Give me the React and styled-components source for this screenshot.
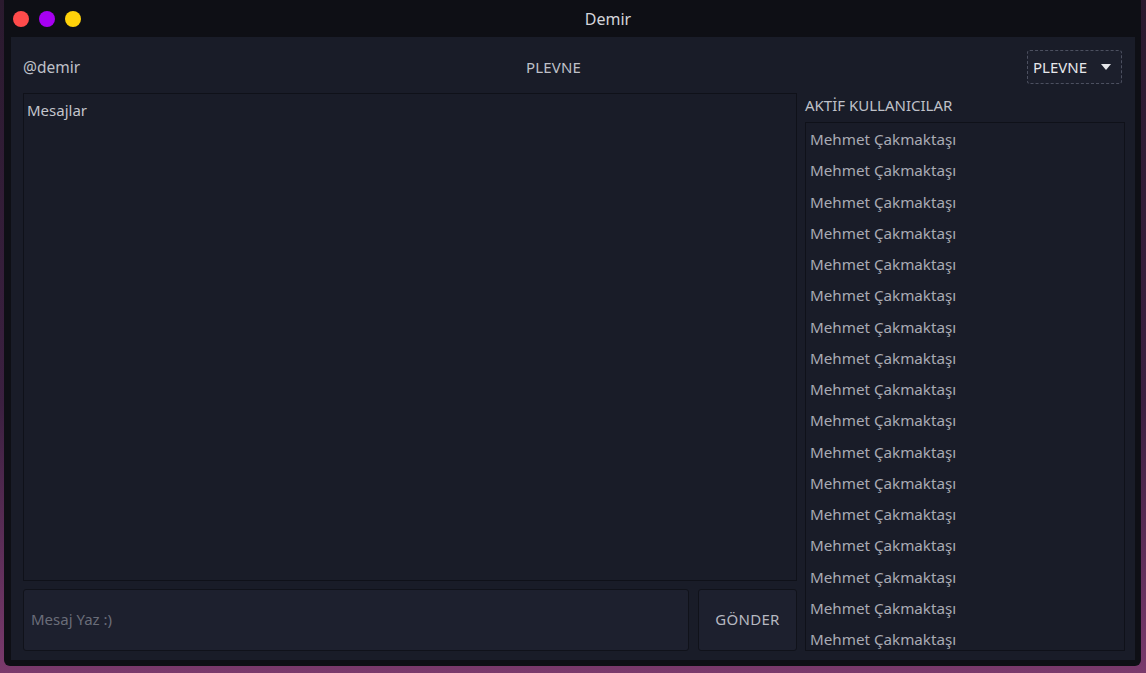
import React from 'react';
import styled, { createGlobalStyle } from 'styled-components';

const GlobalStyle = createGlobalStyle`
  html, body {
    margin: 0;
    padding: 0;
    height: 100%;
    overflow: hidden;
  }
  body {
    background: linear-gradient(180deg, #2a1a2e 0%, #3b2040 60%, #7a3a6c 100%);
    font-family: "Noto Sans", "Open Sans", sans-serif;
  }
`;

const Desktop = styled.div`
  width: 1146px;
  height: 673px;
  padding: 0 5px 7px 4px;
  box-sizing: border-box;
`;

const Window = styled.div`
  height: 100%;
  display: flex;
  flex-direction: column;
  background: #0e0f15;
  border-radius: 0 0 6px 6px;
  padding: 0 6px 6px 7px;
  box-sizing: border-box;
`;

const TitleBar = styled.div`
  height: 37px;
  flex-shrink: 0;
  display: flex;
  align-items: center;
  margin-left: -7px;
  margin-right: -6px;
  padding-left: 9px;
`;

const Lights = styled.div`
  display: flex;
  gap: 10px;
  width: 76px;
`;

const Light = styled.span`
  width: 16px;
  height: 16px;
  border-radius: 50%;
  background: ${(p) => p.color};
`;

const Title = styled.div`
  flex: 1;
  text-align: center;
  color: #d4d5da;
  font-size: 16px;
  padding-right: 14px;
`;

const Content = styled.div`
  flex: 1;
  display: flex;
  flex-direction: column;
  background: #191c28;
  padding: 0 10px 9px 12px;
  min-height: 0;
`;

const Header = styled.div`
  height: 56px;
  flex-shrink: 0;
  display: flex;
  align-items: center;
  justify-content: space-between;
  color: #bfc1c8;
  font-size: 15.5px;
`;

const Handle = styled.span`
  margin-top: 4px;
`;

const Channel = styled.span`
  margin-top: 4px;
  font-size: 15px;
  letter-spacing: 0.2px;
`;

const Select = styled.div`
  width: 95px;
  height: 34px;
  box-sizing: border-box;
  margin-top: 4px;
  margin-right: 3px;
  display: flex;
  align-items: center;
  justify-content: space-between;
  padding: 0 10px 0 5px;
  background: #1c1f2c;
  border: 1px dashed #4c5060;
  border-radius: 3px;
  color: #e6e7ea;
  font-size: 15px;
`;

const Caret = styled.span`
  width: 0;
  height: 0;
  border-left: 5px solid transparent;
  border-right: 5px solid transparent;
  border-top: 6px solid #e6e7ea;
`;

const Main = styled.div`
  flex: 1;
  display: flex;
  gap: 8px;
  min-height: 0;
`;

const ChatColumn = styled.div`
  width: 774px;
  display: flex;
  flex-direction: column;
  gap: 8px;
`;

const Messages = styled.div`
  flex: 1;
  border: 1px solid #0f1119;
  background: #191c28;
  color: #c3c5cc;
  font-size: 15px;
  padding: 6px 3px;
`;

const Composer = styled.div`
  height: 62px;
  flex-shrink: 0;
  display: flex;
  gap: 9px;
`;

const Input = styled.input`
  flex: 1;
  background: #1d202e;
  border: 1px solid #10121a;
  border-radius: 3px;
  padding: 0 7px 2px;
  color: #c3c5cc;
  font-family: inherit;
  font-size: 15px;
  outline: none;
  &::placeholder {
    color: #6a6d79;
  }
`;

const SendButton = styled.button`
  width: 99px;
  background: #1d202e;
  border: 1px solid #10121a;
  border-radius: 3px;
  padding-bottom: 4px;
  color: #b6b8c0;
  font-family: inherit;
  font-size: 15px;
  letter-spacing: 0.3px;
`;

const UsersColumn = styled.div`
  width: 320px;
  display: flex;
  flex-direction: column;
`;

const UsersTitle = styled.div`
  height: 29px;
  flex-shrink: 0;
  display: flex;
  align-items: center;
  color: #bfc1c8;
  font-size: 15px;
  margin-top: -3px;
  margin-bottom: 3px;
`;

const UserList = styled.div`
  flex: 1;
  border: 1px solid #0f1119;
  overflow: hidden;
  padding: 4px 4px 0;
`;

const User = styled.div`
  height: 31.25px;
  line-height: 24px;
  color: #a9abb4;
  font-size: 15.2px;
  white-space: nowrap;
`;

const users = Array.from({ length: 17 }, () => 'Mehmet Çakmaktaşı');

const App = () => (
  <Desktop>
    <GlobalStyle />
    <Window>
      <TitleBar>
        <Lights>
          <Light color="#ff4b4b" />
          <Light color="#a700f2" />
          <Light color="#ffd20a" />
        </Lights>
        <Title>Demir</Title>
      </TitleBar>
      <Content>
        <Header>
          <Handle>@demir</Handle>
          <Channel>PLEVNE</Channel>
          <Select>
            <span>PLEVNE</span>
            <Caret />
          </Select>
        </Header>
        <Main>
          <ChatColumn>
            <Messages>Mesajlar</Messages>
            <Composer>
              <Input placeholder="Mesaj Yaz :)" />
              <SendButton>GÖNDER</SendButton>
            </Composer>
          </ChatColumn>
          <UsersColumn>
            <UsersTitle>AKTİF KULLANICILAR</UsersTitle>
            <UserList>
              {users.map((name, i) => (
                <User key={i}>{name}</User>
              ))}
            </UserList>
          </UsersColumn>
        </Main>
      </Content>
    </Window>
  </Desktop>
);

export default App;
